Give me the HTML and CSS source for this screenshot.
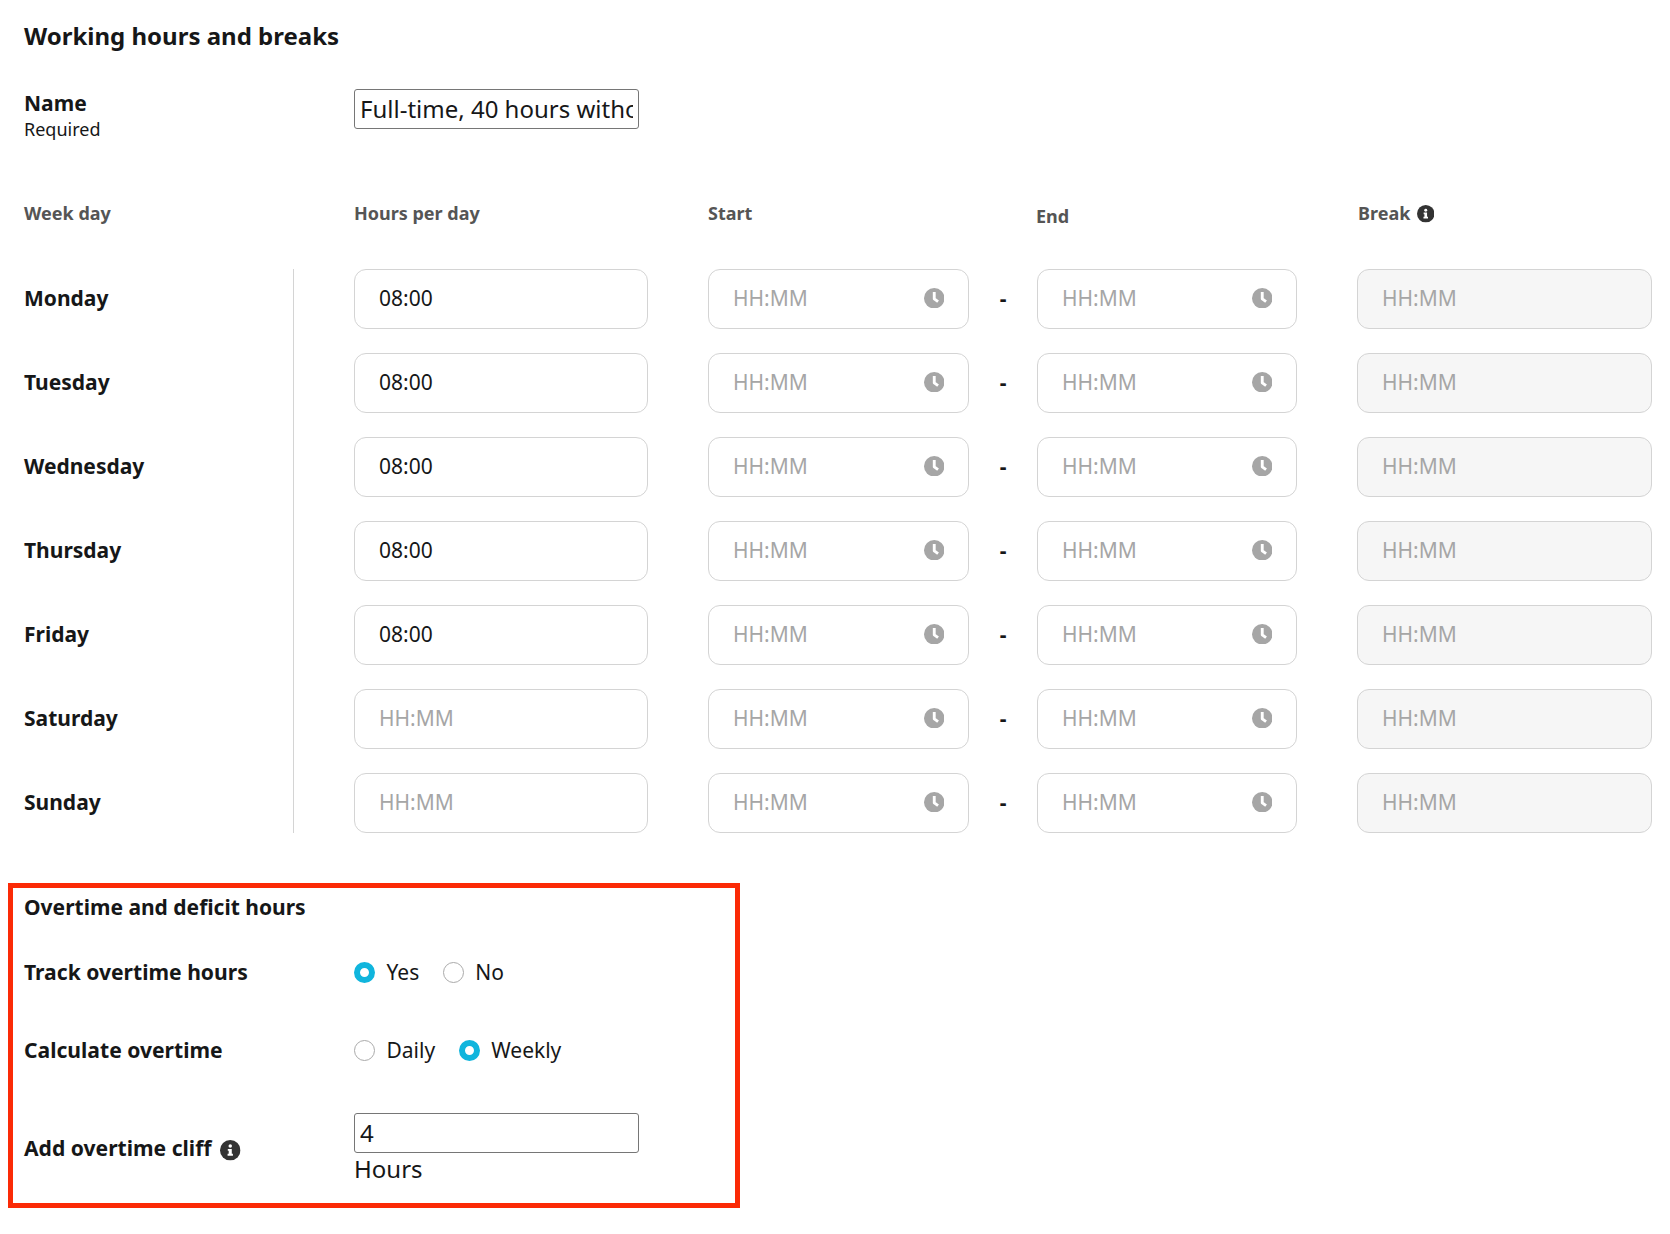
FILE: index.html
```html
<!doctype html>
<html lang="en">
<head>
	<meta charset="UTF-8">
	<meta name="viewport" content="width=device-width, initial-scale=1.0">
	<title>Working hours and breaks</title>
	<link rel="stylesheet" href="styles.css">
</head>
<body>
	<svg class="sprite">
		<symbol id="clock" viewBox="0 0 20 20">
			<circle cx="10" cy="10" r="10" fill="currentColor"/>
			<path d="M10 5.2V10.5L12.6 12.5" fill="none" stroke="#fff" stroke-width="2.8" stroke-linecap="square" stroke-linejoin="round"/>
		</symbol>
		<symbol id="info" viewBox="0 0 20 20">
			<circle cx="10" cy="10" r="10" fill="currentColor"/>
			<circle cx="10" cy="5.9" r="1.7" fill="#fff"/>
			<path d="M7.6 8.7H11.5V13.4H12.6V15.4H7.4V13.4H8.5V10.6H7.6Z" fill="#fff"/>
		</symbol>
	</svg>

	<form class="schedule">
		<h1>Working hours and breaks</h1>

		<div class="name">
			<div class="label">
				<label for="name">Name</label>
				<small>Required</small>
			</div>
			<input class="plain" id="name" type="text" value="Full-time, 40 hours without core hours">
		</div>

		<div class="head">
			<span>Week day</span>
			<span>Hours per day</span>
			<span>Start</span>
			<span class="end">End</span>
			<span class="break">Break <svg class="info"><use href="#info"/></svg></span>
		</div>

		<div class="week">
			<div class="days"></div>
			<div class="hours"></div>
		</div>
	</form>

	<section class="overtime">
		<h2>Overtime and deficit hours</h2>
		<div class="row">
			<span class="label">Track overtime hours</span>
			<label class="radio"><input type="radio" name="track" checked>Yes</label>
			<label class="radio"><input type="radio" name="track">No</label>
		</div>
		<div class="row">
			<span class="label">Calculate overtime</span>
			<label class="radio"><input type="radio" name="calc">Daily</label>
			<label class="radio"><input type="radio" name="calc" checked>Weekly</label>
		</div>
		<div class="row cliff">
			<label class="label" for="cliff">Add overtime cliff <svg class="info"><use href="#info"/></svg></label>
			<div class="amount">
				<input class="plain" id="cliff" type="text" value="4">
				<span>Hours</span>
			</div>
		</div>
	</section>

	<script>
		const week = [
			["Monday", "08:00"],
			["Tuesday", "08:00"],
			["Wednesday", "08:00"],
			["Thursday", "08:00"],
			["Friday", "08:00"],
			["Saturday", ""],
			["Sunday", ""]
		];
		const days = document.querySelector(".days");
		const hours = document.querySelector(".hours");
		const clock = '<svg class="clock"><use href="#clock"/></svg>';

		for (let i = 0; i < week.length; i++) {
			days.innerHTML += '<span>' + week[i][0] + '</span>';
			hours.innerHTML += '<div class="field total"><input placeholder="HH:MM" value="' + week[i][1] + '"></div>'
				+ '<div class="field from"><input placeholder="HH:MM">' + clock + '</div>'
				+ '<span class="dash">-</span>'
				+ '<div class="field to"><input placeholder="HH:MM">' + clock + '</div>'
				+ '<div class="field disabled"><input placeholder="HH:MM" disabled></div>';
		}
	</script>
</body>
</html>
```
FILE: styles.css
```css
* {
	box-sizing: border-box;
}

body {
	margin: 0;
	background-color: #fff;
	color: #161718;
	font: 400 21px/28px "Noto Sans", "Open Sans", sans-serif;
}

input {
	margin: 0;
	color: inherit;
	font: inherit;
}

h1 {
	margin: 0 0 37px;
	font-size: 24px;
	line-height: 32px;
}

h2 {
	margin: 0 0 37px;
	font-size: 21px;
	line-height: 28px;
}

.sprite {
	display: none;
}

.schedule {
	padding: 20px 18px 0 24px;
}

.label {
	flex: none;
	width: 330px;
	font-weight: 700;
}

.plain {
	display: block;
	width: 285px;
	height: 40px;
	padding: 0 5px 2px;
	border: 1px solid #767676;
	border-radius: 3px;
	background-color: #fff;
	font-size: 24px;
}

.name {
	display: flex;
	height: 52px;
	margin-bottom: 60px;
}

.name label,
.name small {
	display: block;
}

.name small {
	font-size: 18px;
	font-weight: 400;
	line-height: 24px;
}

/* week table */
.head {
	display: grid;
	grid-template-columns: 330px 354px 328px 322px 294px;
	height: 68px;
	color: #555;
	font-size: 18px;
	font-weight: 700;
	line-height: 24px;
}

.head .end {
	padding-top: 3px;
}

.head .break {
	display: flex;
}

.info {
	flex: none;
	color: #333;
}

.head .info {
	width: 17.5px;
	height: 17.5px;
	margin: 4px 0 0 6.5px;
}

.week {
	display: flex;
}

.days {
	display: flex;
	flex: none;
	flex-direction: column;
	gap: 24px;
	width: 270px;
	margin-right: 60px;
	border-right: 1px solid #d4d4d4;
	font-weight: 700;
}

.days span {
	height: 60px;
	line-height: 58px;
}

.hours {
	display: grid;
	grid-template-columns: 354px 261px 68px 320px 295px;
	row-gap: 24px;
}

.dash {
	font-weight: 700;
	line-height: 58px;
	text-align: center;
}

.field {
	display: flex;
	align-items: center;
	height: 60px;
	padding: 0 24px;
	border: 1px solid #d4d4d4;
	border-radius: 12px;
	background-color: #fff;
}

.field.total {
	width: 294px;
}

.field.to {
	width: 260px;
}

.field input {
	flex: 1;
	min-width: 0;
	height: 58px;
	padding: 0 0 2px;
	border: 0;
	background: none;
}

.field input::placeholder {
	color: #a6a6a6;
	opacity: 1;
}

.field.disabled {
	background-color: #f6f6f6;
}

.clock {
	flex: none;
	width: 20.5px;
	height: 20.5px;
	margin-top: -2px;
	color: #a6a6a6;
}

/* overtime */
.overtime {
	width: 732px;
	height: 325px;
	margin: 50px 0 0 8px;
	padding: 5px 11px;
	border: 5px solid #fb2a06;
}

.row {
	display: flex;
	margin-bottom: 49.5px;
}

.row .label {
	font-size: 21.1px;
}

.radio {
	display: flex;
	margin-right: 23.5px;
}

.radio input {
	appearance: none;
	width: 21px;
	height: 21px;
	margin: 4px 11.5px 0 0;
	border: 1px solid #aaa;
	border-radius: 50%;
}

.radio input:checked {
	border: 6px solid #10b5dd;
}

.cliff .label {
	display: flex;
	padding-top: 21px;
}

.cliff .info {
	width: 20.5px;
	height: 20.5px;
	margin: 6px 0 0 9px;
}

.amount {
	font-size: 24px;
}

.amount span {
	display: block;
	padding-top: 2px;
}
```
